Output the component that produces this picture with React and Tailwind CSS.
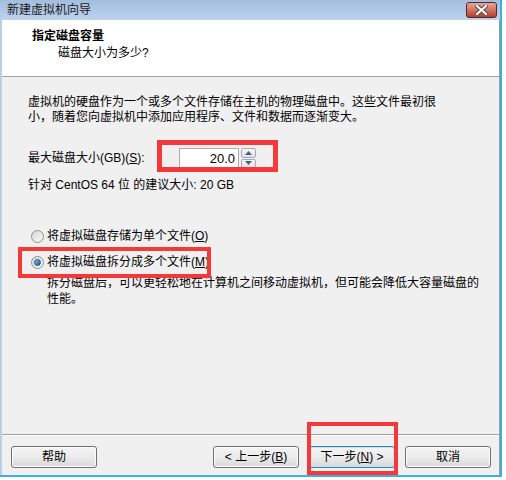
import React from 'react'

const font = { fontFamily: '"Liberation Sans", "Noto Sans CJK SC", sans-serif' }

function Radio({ checked }) {
  return (
    <span className="w-[13px] h-[13px] rounded-full border border-[#8e8f8f] bg-gradient-to-br from-[#d6d6d6] to-[#fbfbfb] flex items-center justify-center shrink-0">
      {checked && <span className="w-[7px] h-[7px] rounded-full bg-gradient-to-br from-[#7fd0fb] to-[#12528f] border border-[#1d4f7d]" />}
    </span>
  )
}

function Btn({ children, primary }) {
  return (
    <button
      className={
        'w-[86px] h-[22px] rounded-[3px] border text-[12px] text-black flex items-center justify-center bg-gradient-to-b from-[#f4f4f4] via-[#ebebeb] to-[#d9d9d9] ' +
        (primary ? 'border-[#3c7fb1] shadow-[inset_0_0_0_1px_#bfe6fb]' : 'border-[#707070] shadow-[inset_0_0_0_1px_#fcfcfc]')
      }
    >
      {children}
    </button>
  )
}

function Arrow({ up }) {
  return (
    <svg width="7" height="4" viewBox="0 0 7 4">
      <path d={up ? 'M0 4 L3.5 0 L7 4 Z' : 'M0 0 L3.5 4 L7 0 Z'} fill="#4c5f86" />
    </svg>
  )
}

export default function App() {
  return (
    <div className="w-[506px] h-[480px] bg-white relative overflow-hidden text-[12px] text-black" style={font}>
      <div className="w-[502px] h-[477px] flex flex-col border-r-2 border-b-2 border-[#3eb0de]">
        {/* title bar */}
        <div className="h-[20px] shrink-0 flex items-center justify-between pl-[7px] pr-[3px] bg-gradient-to-b from-[#a3bddd] to-[#bcd3ec]">
          <span className="text-[#1b1b1b] leading-none">新建虚拟机向导</span>
          <div className="w-[31px] h-[16px] rounded-[3px] border border-[#4e2a2a] bg-gradient-to-b from-[#e8a799] via-[#d27261] to-[#b93a2b] flex items-center justify-center">
            <svg width="13" height="10" viewBox="0 0 13 10">
              <path d="M2 1 L11 9 M11 1 L2 9" stroke="#4a4a4a" strokeWidth="4" strokeLinecap="square" />
              <path d="M2 1 L11 9 M11 1 L2 9" stroke="#ffffff" strokeWidth="2.2" strokeLinecap="square" />
            </svg>
          </div>
        </div>

        <div className="flex-1 flex flex-col border-l-2 border-[#b9cfe9] border-r border-r-[#9a9a9a] bg-[#f0f0f0]">
          {/* header */}
          <div className="h-[57px] shrink-0 bg-white border-b border-[#a0a0a0] pt-[9px] leading-[15px]">
            <div className="pl-[30px] font-bold">指定磁盘容量</div>
            <div className="pl-[56px] mt-[2px]">磁盘大小为多少?</div>
          </div>

          {/* body */}
          <div className="flex-1 flex flex-col pl-[26px] pt-[18px] leading-[15px]">
            <p>
              虚拟机的硬盘作为一个或多个文件存储在主机的物理磁盘中。这些文件最初很
              <br />
              小，随着您向虚拟机中添加应用程序、文件和数据而逐渐变大。
            </p>

            <div className="flex items-center mt-[23px] h-[20px]">
              <span className="w-[151px]">
                最大磁盘大小(GB)(<span className="underline">S</span>):
              </span>
              <div className="flex items-center h-[20px]">
                <div className="w-[60px] h-[20px] bg-white border border-[#abadb3] flex items-center justify-end pr-[3px] text-[13px]">20.0</div>
                <div className="ml-[2px] w-[15px] h-[20px] flex flex-col gap-[1px]">
                  <div className="flex-1 border border-[#a7abb0] rounded-[2px] bg-gradient-to-b from-[#f7f7f7] to-[#dfe2e7] flex items-center justify-center">
                    <Arrow up />
                  </div>
                  <div className="flex-1 border border-[#a7abb0] rounded-[2px] bg-gradient-to-b from-[#f7f7f7] to-[#dfe2e7] flex items-center justify-center">
                    <Arrow />
                  </div>
                </div>
              </div>
            </div>

            <div className="mt-[10px]">针对 CentOS 64 位 的建议大小: 20 GB</div>

            <label className="flex items-center mt-[36px] ml-[3px] gap-[3px]">
              <Radio />
              <span>
                将虚拟磁盘存储为单个文件(<span className="underline">O</span>)
              </span>
            </label>
            <label className="flex items-center mt-[11px] ml-[3px] gap-[3px]">
              <Radio checked />
              <span>
                将虚拟磁盘拆分成多个文件(<span className="underline">M</span>)
              </span>
            </label>
            <p className="ml-[19px] mt-[5px] leading-[16px]">
              拆分磁盘后，可以更轻松地在计算机之间移动虚拟机，但可能会降低大容量磁盘的
              <br />
              性能。
            </p>
          </div>

          {/* footer */}
          <div className="h-[41px] shrink-0 border-t border-[#a0a0a0] shadow-[inset_0_1px_0_#ffffff] pt-[11px] pl-[9px] pr-[8px] flex gap-[10px]">
            <Btn>帮助</Btn>
            <div className="flex-1" />
            <Btn>
                &lt; 上一步(<span className="underline">B</span>)
            </Btn>
            <Btn primary>
              下一步(<span className="underline">N</span>) &gt;
            </Btn>
            <Btn>取消</Btn>
          </div>
        </div>
      </div>

      {/* red annotation boxes */}
      <div className="absolute left-[157px] top-[140px] w-[121px] h-[32px] border-[5px] border-[#f5393b] pointer-events-none" />
      <div className="absolute left-[18px] top-[247px] w-[193px] h-[31px] border-4 border-[#f5393b] pointer-events-none" />
      <div className="absolute left-[307px] top-[422px] w-[91px] h-[53px] border-4 border-[#f5393b] pointer-events-none" />
    </div>
  )
}
